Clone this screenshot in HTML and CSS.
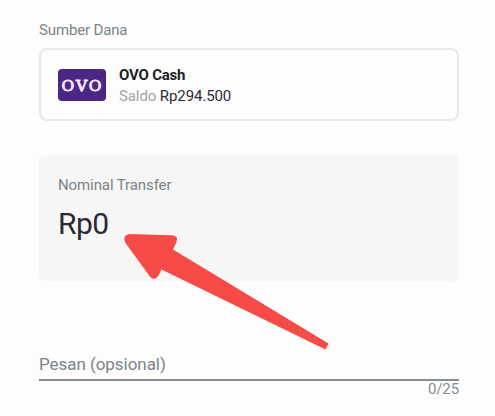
FILE: index.html
```html
<!DOCTYPE html>
<html lang="id">
<head>
    <meta charset="UTF-8">
    <meta name="viewport" content="width=device-width, initial-scale=1.0">
    <title>Transfer OVO</title>
    <link rel="stylesheet" href="styles.css">
</head>
<body>
    <main class="transfer">
        <div class="label">Sumber Dana</div>
        <section class="source">
            <svg class="logo" viewBox="0 0 48 32" width="48" height="32">
                <rect width="48" height="32" rx="4" />
                <text x="3.500" y="22.200" textLength="40">OVO</text>
            </svg>
            <div class="source-info">
                <div class="source-name">OVO Cash</div>
                <div class="balance"><span class="balance-label">Saldo</span> <span class="balance-value">Rp294.500</span></div>
            </div>
        </section>
        <section class="amount">
            <div class="amount-label">Nominal Transfer</div>
            <div class="amount-value">Rp0</div>
        </section>
        <div class="message"><span>Pesan (opsional)</span></div>
        <div class="counter">0/25</div>
    </main>
    <svg class="arrow" viewBox="0 0 206 118" width="206" height="118">
        <path d="M9 4 L52 5.200 Q59 6 56.500 12 L53 19.500 L208.500 113.500 L205.500 119.500 L41.500 39.500 L38.500 45.500 Q34 52 29.500 46 L5.500 13 Q2 5.500 9 4 Z" />
    </svg>
</body>
</html>
```
FILE: styles.css
```css
* {
    box-sizing: border-box;
}

body {
    margin: 0;
    background-color: #fdfdfd;
    color: #2d2935;
    font-family: Roboto, "Liberation Sans", sans-serif;
    position: relative;
}

.transfer {
    width: 420px;
    margin-left: 39px;
    padding-top: 20px;
}

.label {
    height: 28px;
    line-height: 20px;
    font-size: 15px;
    letter-spacing: -0.15px;
    color: #7b8388;
}

.source {
    display: flex;
    align-items: center;
    gap: 13px;
    height: 73px;
    padding-left: 17px;
    border: 2px solid #e8e8e9;
    border-radius: 8px;
}

.logo rect {
    fill: #4b2785;
}

.logo text {
    fill: #f3e9f5;
    stroke: #f3e9f5;
    stroke-width: 0.9px;
    font-family: "DejaVu Serif", serif;
    font-size: 15.5px;
}

.source-info {
    padding-top: 2px;
}

.source-name {
    line-height: 21px;
    font-size: 15px;
    font-weight: bold;
    letter-spacing: -0.2px;
    color: #211e28;
}

.balance {
    line-height: 21px;
    font-size: 15px;
    letter-spacing: -0.1px;
}

.balance-label {
    color: #a1a5a9;
}

.amount {
    height: 126px;
    margin-top: 34px;
    padding: 20px 19px;
    border-radius: 6px;
    background-color: #f6f6f6;
}

.amount-label {
    line-height: 21px;
    font-size: 15px;
    letter-spacing: -0.1px;
    color: #7b8388;
}

.amount-value {
    margin-top: 10px;
    line-height: 36px;
    font-size: 30px;
    letter-spacing: -0.5px;
}

.message {
    height: 34px;
    margin-top: 66px;
    padding-top: 6px;
    border-bottom: 2px solid #858d92;
    line-height: 22px;
    font-size: 17px;
    letter-spacing: -0.05px;
    color: #7b8388;
}

.counter {
    line-height: 17px;
    font-size: 15px;
    letter-spacing: -0.1px;
    text-align: right;
    color: #858b91;
}

/* pointer over the amount */
.arrow {
    position: absolute;
    left: 120px;
    top: 230px;
    overflow: visible;
}

.arrow path {
    fill: #f84b47;
}
```
